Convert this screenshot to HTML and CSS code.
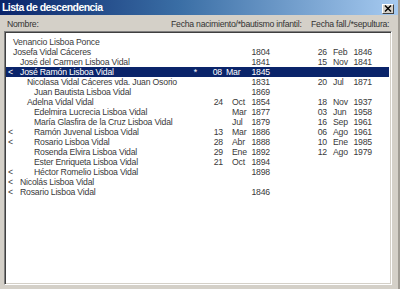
FILE: index.html
```html
<!DOCTYPE html>
<html>
<head>
<meta charset="utf-8">
<link rel="stylesheet" href="styles.css">
</head>
<body>
<div class="window">
  <div class="titlebar">
    <span class="title">Lista de descendencia</span>
    <span class="close"><svg width="8" height="7" viewBox="0 0 8 7"><path d="M1 0.5 L7 6.5 M7 0.5 L1 6.5" stroke="#000" stroke-width="1.4"/></svg></span>
  </div>
  <div class="header">
    <span class="h-name">Nombre:</span>
    <span class="h-birth">Fecha nacimiento/*bautismo infantil:</span>
    <span class="h-death">Fecha fall./*sepultura:</span>
  </div>
  <div class="listbox">
    <div class="row"><span class="mk"></span><span class="nm l0">Venancio Lisboa Ponce</span><span class="bd"></span><span class="bm"></span><span class="by"></span><span class="dd"></span><span class="dm"></span><span class="dy"></span></div>
    <div class="row"><span class="mk"></span><span class="nm l0">Josefa Vidal Cáceres</span><span class="bd"></span><span class="bm"></span><span class="by">1804</span><span class="dd">26</span><span class="dm">Feb</span><span class="dy">1846</span></div>
    <div class="row"><span class="mk"></span><span class="nm l1">José del Carmen Lisboa Vidal</span><span class="bd"></span><span class="bm"></span><span class="by">1841</span><span class="dd">15</span><span class="dm">Nov</span><span class="dy">1841</span></div>
    <div class="row selected"><span class="mk">&lt;</span><span class="nm l1">José Ramón Lisboa Vidal<span class="star">*</span></span><span class="bd">08</span><span class="bm">Mar</span><span class="by">1845</span><span class="dd"></span><span class="dm"></span><span class="dy"></span></div>
    <div class="row"><span class="mk"></span><span class="nm l2">Nicolasa Vidal Cáceres vda. Juan Osorio</span><span class="bd"></span><span class="bm"></span><span class="by">1831</span><span class="dd">20</span><span class="dm">Jul</span><span class="dy">1871</span></div>
    <div class="row"><span class="mk"></span><span class="nm l3">Juan Bautista Lisboa Vidal</span><span class="bd"></span><span class="bm"></span><span class="by">1869</span><span class="dd"></span><span class="dm"></span><span class="dy"></span></div>
    <div class="row"><span class="mk"></span><span class="nm l2">Adelna Vidal Vidal</span><span class="bd">24</span><span class="bm">Oct</span><span class="by">1854</span><span class="dd">18</span><span class="dm">Nov</span><span class="dy">1937</span></div>
    <div class="row"><span class="mk"></span><span class="nm l3">Edelmira Lucrecia Lisboa Vidal</span><span class="bd"></span><span class="bm">Mar</span><span class="by">1877</span><span class="dd">03</span><span class="dm">Jun</span><span class="dy">1958</span></div>
    <div class="row"><span class="mk"></span><span class="nm l3">María Glasfira de la Cruz Lisboa Vidal</span><span class="bd"></span><span class="bm">Jul</span><span class="by">1879</span><span class="dd">16</span><span class="dm">Sep</span><span class="dy">1961</span></div>
    <div class="row"><span class="mk">&lt;</span><span class="nm l3">Ramón Juvenal Lisboa Vidal</span><span class="bd">13</span><span class="bm">Mar</span><span class="by">1886</span><span class="dd">06</span><span class="dm">Ago</span><span class="dy">1961</span></div>
    <div class="row"><span class="mk">&lt;</span><span class="nm l3">Rosario Lisboa Vidal</span><span class="bd">28</span><span class="bm">Abr</span><span class="by">1888</span><span class="dd">10</span><span class="dm">Ene</span><span class="dy">1985</span></div>
    <div class="row"><span class="mk"></span><span class="nm l3">Rosenda Elvira Lisboa Vidal</span><span class="bd">29</span><span class="bm">Ene</span><span class="by">1892</span><span class="dd">12</span><span class="dm">Ago</span><span class="dy">1979</span></div>
    <div class="row"><span class="mk"></span><span class="nm l3">Ester Enriqueta Lisboa Vidal</span><span class="bd">21</span><span class="bm">Oct</span><span class="by">1894</span><span class="dd"></span><span class="dm"></span><span class="dy"></span></div>
    <div class="row"><span class="mk">&lt;</span><span class="nm l3">Héctor Romelio Lisboa Vidal</span><span class="bd"></span><span class="bm"></span><span class="by">1898</span><span class="dd"></span><span class="dm"></span><span class="dy"></span></div>
    <div class="row"><span class="mk">&lt;</span><span class="nm l1">Nicolás Lisboa Vidal</span><span class="bd"></span><span class="bm"></span><span class="by"></span><span class="dd"></span><span class="dm"></span><span class="dy"></span></div>
    <div class="row"><span class="mk">&lt;</span><span class="nm l1">Rosario Lisboa Vidal</span><span class="bd"></span><span class="bm"></span><span class="by">1846</span><span class="dd"></span><span class="dm"></span><span class="dy"></span></div>
  </div>
</div>
</body>
</html>
```

FILE: styles.css
```css
html, body {
  margin: 0;
  padding: 0;
}
body {
  width: 400px;
  height: 289px;
  overflow: hidden;
  background: #d4d0c8;
  font-family: "Liberation Sans", Arial, sans-serif;
}
.window {
  width: 398px;
  height: 289px;
  border-right: 2px solid #a09c94;
  display: flex;
  flex-direction: column;
}
.titlebar {
  height: 15px;
  flex: none;
  background: linear-gradient(to right, #0a246a 0%, #3a6ea5 45%, #a6caf0 100%);
  display: flex;
  align-items: center;
  justify-content: space-between;
  padding: 0 4px 0 2px;
}
.title {
  color: #fff;
  font-weight: bold;
  font-size: 10.5px;
  letter-spacing: -0.55px;
  line-height: 15px;
}
.close {
  width: 10px;
  height: 8px;
  margin-top: 2px;
  background: #d4d0c8;
  border: 1px solid;
  border-color: #fff #404040 #404040 #fff;
  display: flex;
  align-items: center;
  justify-content: center;
}
.header {
  flex: none;
  height: 16px;
  display: flex;
  align-items: center;
  padding-left: 7px;
  padding-top: 1px;
  box-sizing: border-box;
  font-size: 8.7px;
  letter-spacing: -0.25px;
  color: #333;
  white-space: nowrap;
}
.h-name {
  width: 164px;
}
.h-birth {
  width: 140px;
}
.listbox {
  flex: none;
  margin: 0 6px 0 4px;
  height: 254px;
  box-sizing: border-box;
  background: #fff;
  border: 1px solid;
  border-color: #808080 #fff #fff #808080;
  box-shadow: inset 1px 1px 0 #404040, inset -1px -1px 0 #d4d0c8;
  padding: 5px 2px 2px 1px;
  font-size: 8.7px;
  letter-spacing: -0.2px;
  color: #3a3a3a;
}
.row {
  height: 10px;
  line-height: 10px;
  display: grid;
  grid-template-columns: 7px 197px 13px 27px 20px 57px 23px 22px 1fr;
  white-space: nowrap;
}
.row.selected {
  background: #0a246a;
  color: #fff;
}
.mk {
  padding-left: 2px;
}
.nm {
  display: flex;
  overflow: visible;
}
.l0 { padding-left: 0; }
.l1 { padding-left: 7px; }
.l2 { padding-left: 14px; }
.l3 { padding-left: 21px; }
.star {
  margin-left: auto;
  margin-right: 13px;
}
.bd, .by, .dd, .dy {
  text-align: right;
}
.bm {
  padding-left: 9px;
}
.selected .bd {
  padding-right: 1px;
}
.selected .bm {
  padding-left: 3px;
}
.dm {
  padding-left: 6px;
}
```
